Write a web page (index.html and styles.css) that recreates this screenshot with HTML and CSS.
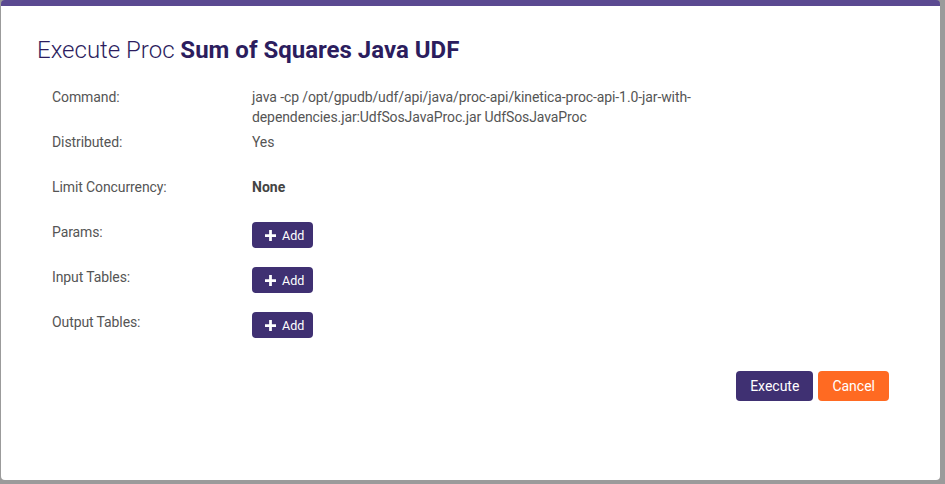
FILE: index.html
```html
<!DOCTYPE html>
<html lang="en">
<head>
    <meta charset="UTF-8">
    <meta name="viewport" content="width=device-width, initial-scale=1.0">
    <title>Execute Proc</title>
    <link rel="stylesheet" href="styles.css">
</head>
<body>

<div class="modal">
    <h1 class="modal-title">Execute Proc <strong>Sum of Squares Java UDF</strong></h1>

    <div class="form">
        <div class="row">
            <div class="label">Command:</div>
            <div class="value">java -cp /opt/gpudb/udf/api/java/proc-api/kinetica-proc-api-1.0-jar-with-dependencies.jar:UdfSosJavaProc.jar UdfSosJavaProc</div>
        </div>
        <div class="row">
            <div class="label">Distributed:</div>
            <div class="value">Yes</div>
        </div>
        <div class="row">
            <div class="label">Limit Concurrency:</div>
            <div class="value"><strong>None</strong></div>
        </div>
        <div class="row">
            <div class="label">Params:</div>
            <div class="value">
                <button class="btn btn-add"><svg class="plus" viewBox="0 0 12 12"><path d="M4.5 0h3v4.5H12v3H7.5V12h-3V7.5H0v-3h4.5z"/></svg>Add</button>
            </div>
        </div>
        <div class="row">
            <div class="label">Input Tables:</div>
            <div class="value">
                <button class="btn btn-add"><svg class="plus" viewBox="0 0 12 12"><path d="M4.5 0h3v4.5H12v3H7.5V12h-3V7.5H0v-3h4.5z"/></svg>Add</button>
            </div>
        </div>
        <div class="row">
            <div class="label">Output Tables:</div>
            <div class="value">
                <button class="btn btn-add"><svg class="plus" viewBox="0 0 12 12"><path d="M4.5 0h3v4.5H12v3H7.5V12h-3V7.5H0v-3h4.5z"/></svg>Add</button>
            </div>
        </div>
    </div>

    <div class="modal-footer">
        <button class="btn btn-primary">Execute</button>
        <button class="btn btn-cancel">Cancel</button>
    </div>
</div>

</body>
</html>
```

FILE: styles.css
```css
body {
    font-family: Roboto, "Liberation Sans", sans-serif;
    background-color: #9b9b9b;
    margin: 0;
    height: 484px;
    overflow: hidden;
}

.modal {
    box-sizing: border-box;
    width: 939px;
    height: 480px;
    margin-left: 1px;
    background-color: #fff;
    border-top: 6px solid #5b4a91;
    border-radius: 4px;
}

.modal-title {
    margin: 0;
    padding: 30px 0 0 36px;
    font-size: 24px;
    line-height: 28px;
    font-weight: 300;
    color: #2c1d5e;
}

.modal-title strong {
    font-weight: 700;
}

.form {
    padding: 23px 0 0 51px;
}

.row {
    display: grid;
    grid-template-columns: 200px 445px;
    min-height: 40px;
    margin-bottom: 5px;
    font-size: 14px;
    line-height: 20px;
    letter-spacing: -0.1px;
    color: #555;
}

.value strong {
    color: #444;
    letter-spacing: 0;
}

.btn {
    font-family: Roboto, "Liberation Sans", sans-serif;
    border: none;
    border-radius: 4px;
    color: #fff;
    cursor: pointer;
}

.btn-add {
    display: flex;
    align-items: center;
    height: 26px;
    padding: 0 9px 0 13px;
    font-size: 12.5px;
    letter-spacing: 0;
    background-color: #3f3072;
}

.plus {
    width: 11px;
    height: 11px;
    margin-right: 6px;
    fill: #fff;
}

.modal-footer {
    display: flex;
    justify-content: flex-end;
    gap: 5px;
    padding: 14px 51px 0 0;
}

.btn-primary,
.btn-cancel {
    height: 30px;
    font-size: 14px;
    padding: 0 14px;
}

.btn-primary {
    background-color: #3f3072;
}

.btn-cancel {
    background-color: #ff6a22;
}
```
